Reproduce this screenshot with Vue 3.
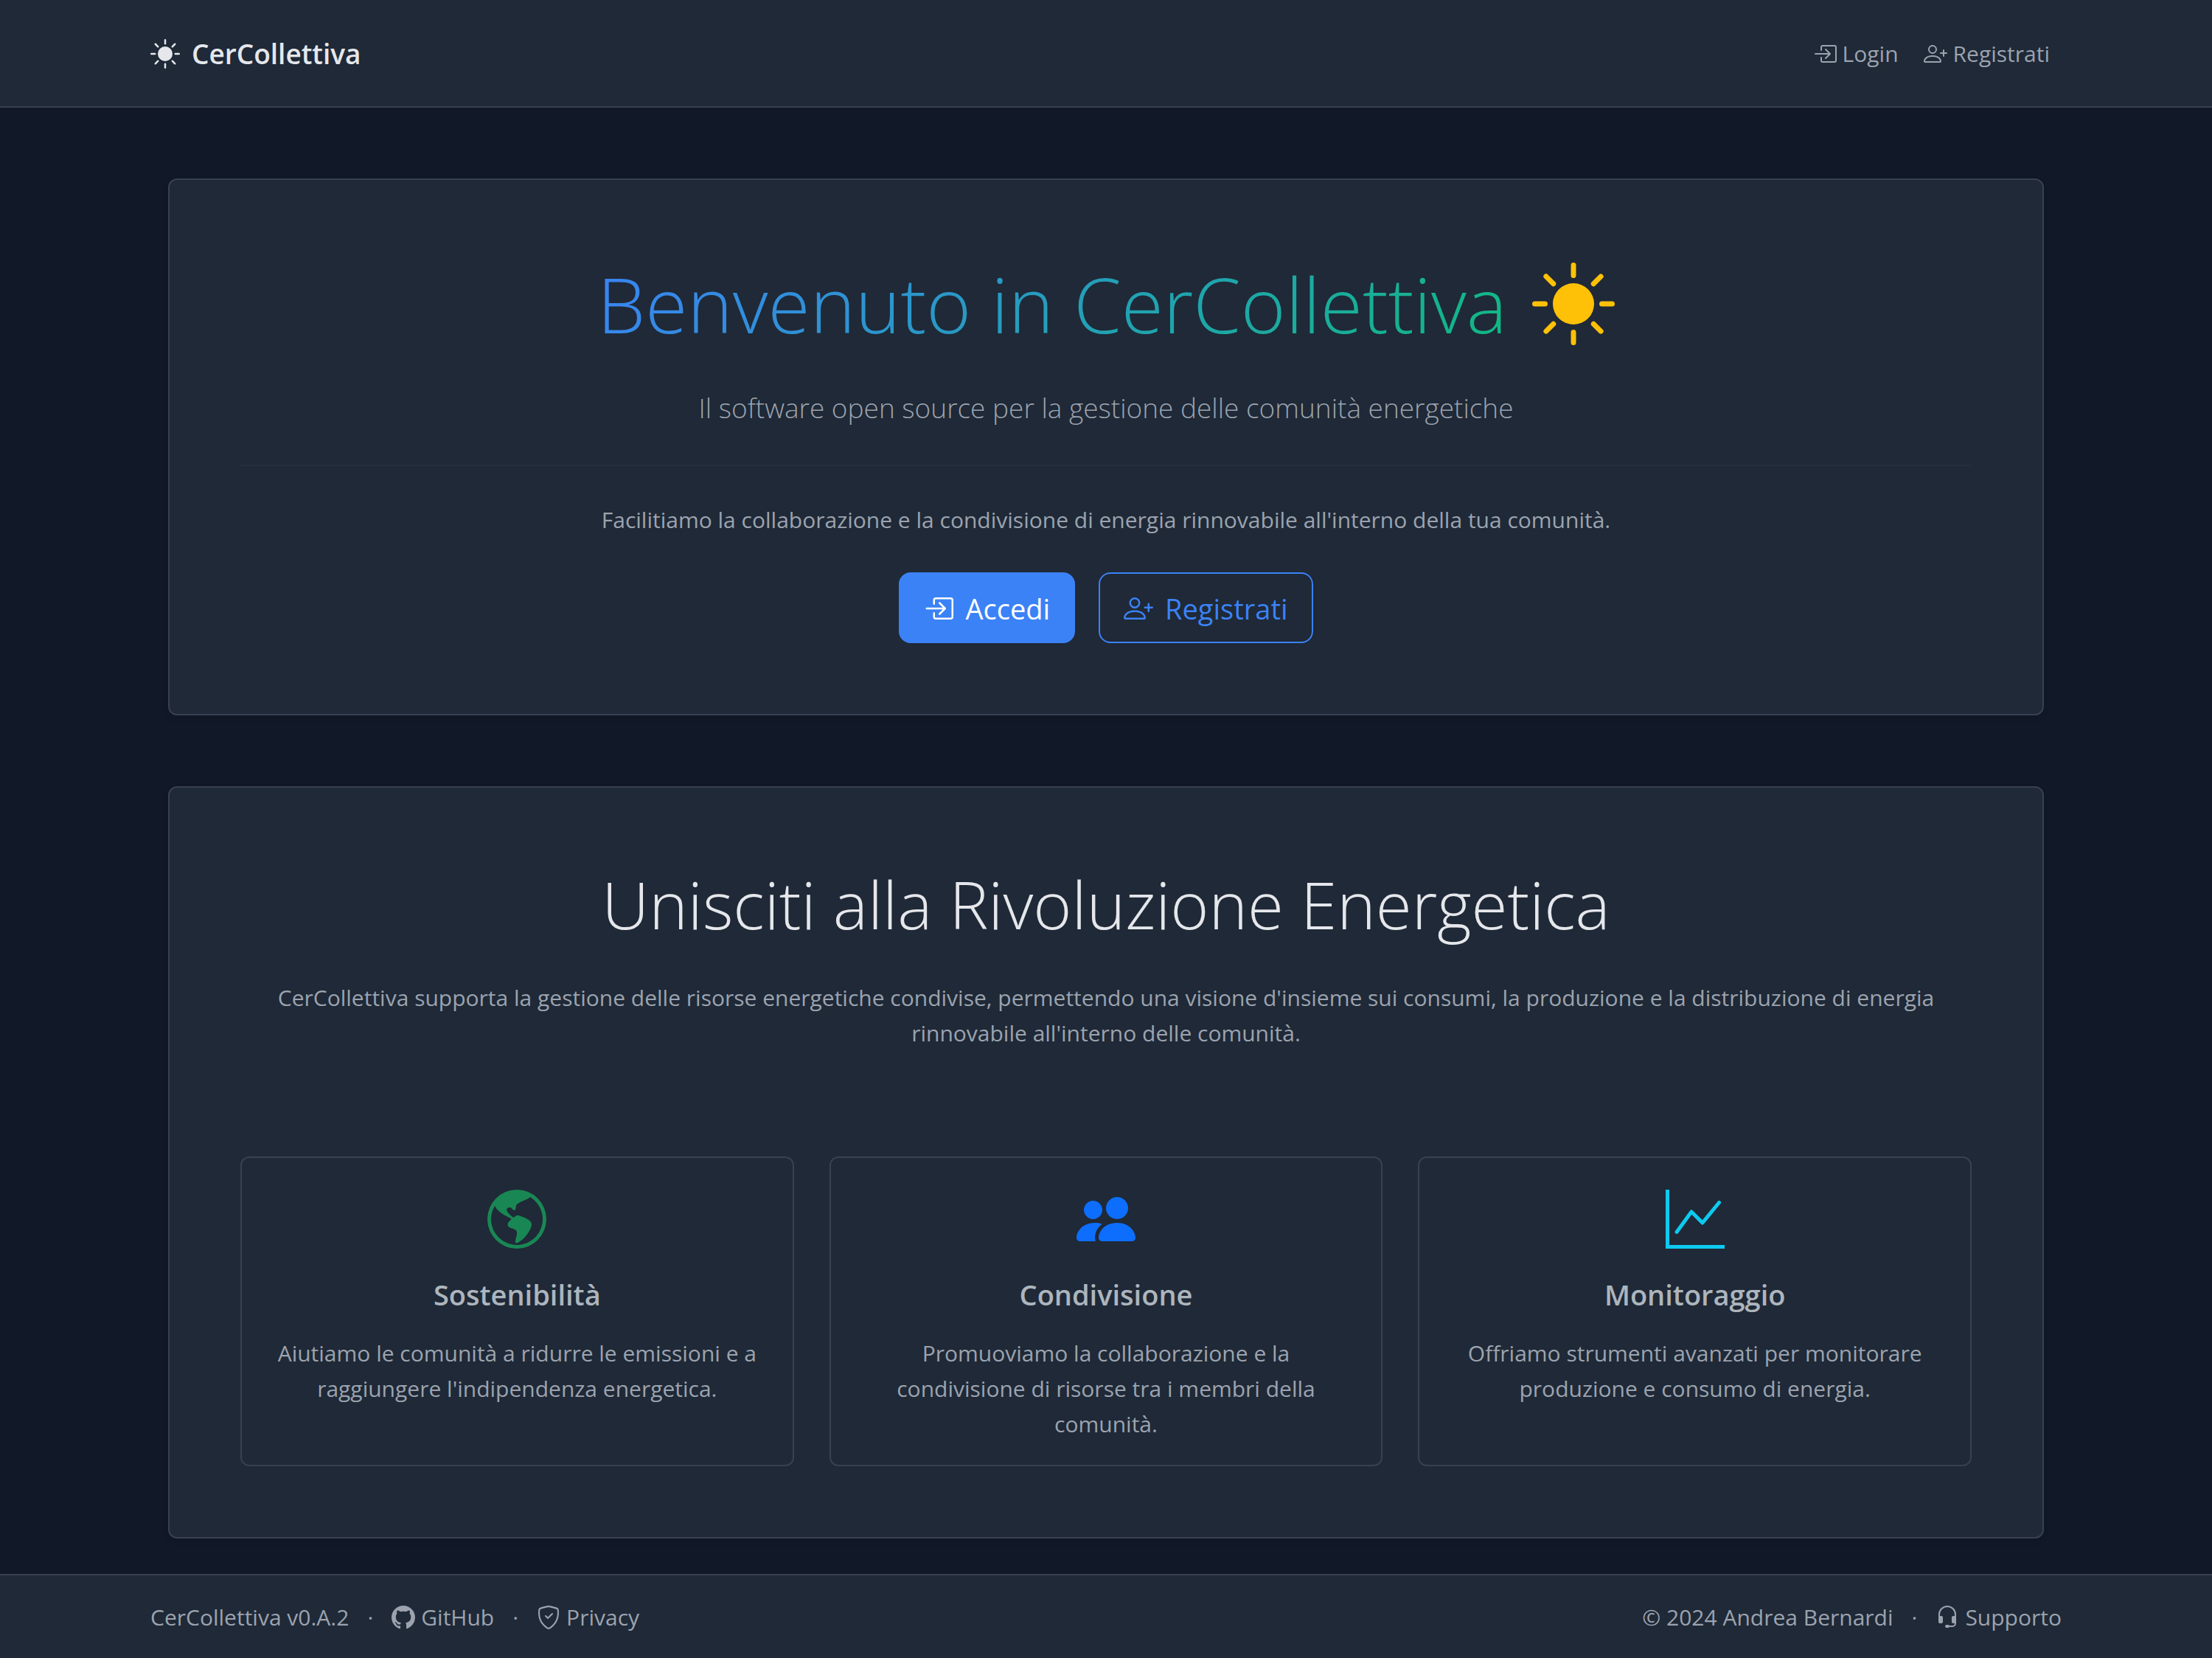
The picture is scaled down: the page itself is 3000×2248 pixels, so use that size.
<script setup>
import { h } from 'vue'

const paths = {
  sun: ['M8 12a4 4 0 1 0 0-8 4 4 0 0 0 0 8M8 0a.5.5 0 0 1 .5.5v2a.5.5 0 0 1-1 0v-2A.5.5 0 0 1 8 0m0 13a.5.5 0 0 1 .5.5v2a.5.5 0 0 1-1 0v-2A.5.5 0 0 1 8 13m8-5a.5.5 0 0 1-.5.5h-2a.5.5 0 0 1 0-1h2a.5.5 0 0 1 .5.5M3 8a.5.5 0 0 1-.5.5h-2a.5.5 0 0 1 0-1h2A.5.5 0 0 1 3 8m10.657-5.657a.5.5 0 0 1 0 .707l-1.414 1.415a.5.5 0 1 1-.707-.708l1.414-1.414a.5.5 0 0 1 .707 0m-9.193 9.193a.5.5 0 0 1 0 .707L3.05 13.657a.5.5 0 0 1-.707-.707l1.414-1.414a.5.5 0 0 1 .707 0m9.193 2.121a.5.5 0 0 1-.707 0l-1.414-1.414a.5.5 0 0 1 .707-.707l1.414 1.414a.5.5 0 0 1 0 .707M4.464 4.465a.5.5 0 0 1-.707 0L2.343 3.05a.5.5 0 1 1 .707-.707l1.414 1.414a.5.5 0 0 1 0 .708'],
  login: [
    'M6 3.5a.5.5 0 0 1 .5-.5h8a.5.5 0 0 1 .5.5v9a.5.5 0 0 1-.5.5h-8a.5.5 0 0 1-.5-.5v-2a.5.5 0 0 0-1 0v2A1.5 1.5 0 0 0 6.5 14h8a1.5 1.5 0 0 0 1.5-1.5v-9A1.5 1.5 0 0 0 14.5 2h-8A1.5 1.5 0 0 0 5 3.5v2a.5.5 0 0 0 1 0z',
    'M11.854 8.354a.5.5 0 0 0 0-.708l-3-3a.5.5 0 1 0-.708.708L10.293 7.5H1.5a.5.5 0 0 0 0 1h8.793l-2.147 2.146a.5.5 0 0 0 .708.708z'
  ],
  userPlus: [
    'M6 8a3 3 0 1 0 0-6 3 3 0 0 0 0 6m2-3a2 2 0 1 1-4 0 2 2 0 0 1 4 0m4 8c0 1-1 1-1 1H1s-1 0-1-1 1-4 6-4 6 3 6 4m-1-.004c-.001-.246-.154-.986-.832-1.664C9.516 10.68 8.289 10 6 10s-3.516.68-4.168 1.332c-.678.678-.83 1.418-.832 1.664z',
    'M13.5 5a.5.5 0 0 1 .5.5V7h1.5a.5.5 0 0 1 0 1H14v1.5a.5.5 0 0 1-1 0V8h-1.5a.5.5 0 0 1 0-1H13V5.5a.5.5 0 0 1 .5-.5'
  ],
  globe: ['M8 0a8 8 0 1 0 0 16A8 8 0 0 0 8 0M2.04 4.326c.325 1.329 2.532 2.54 3.717 3.19.48.263.793.434.743.484q-.121.12-.242.234c-.416.396-.787.749-.758 1.266.035.634.618.824 1.214 1.017.577.188 1.168.38 1.286.983.082.417-.075.988-.22 1.52-.215.782-.406 1.48.22 1.48 1.5-.5 3.798-3.186 4-5 .138-1.243-2-2-3.5-2.5-.478-.16-.755.081-.99.284-.172.15-.322.279-.51.216-.445-.148-2.5-2-1.5-2.5.78-.39.952-.171 1.227.182.078.099.163.208.273.318.609.304.662-.132.723-.633.039-.322.081-.671.277-.867.434-.434 1.265-.791 2.028-1.12.712-.306 1.365-.587 1.579-.88A7 7 0 1 1 2.04 4.327Z'],
  people: ['M7 14s-1 0-1-1 1-4 5-4 5 3 5 4-1 1-1 1zm4-6a3 3 0 1 0 0-6 3 3 0 0 0 0 6m-5.784 6A2.24 2.24 0 0 1 5 13c0-1.355.68-2.75 1.936-3.72A6.3 6.3 0 0 0 5 9c-4 0-5 3-5 4s1 1 1 1zM4.5 8a2.5 2.5 0 1 0 0-5 2.5 2.5 0 0 0 0 5'],
  graph: ['M0 0h1v15h15v1H0zm14.817 3.113a.5.5 0 0 1 .07.704l-4.5 5.5a.5.5 0 0 1-.74.037L7.06 6.767l-3.656 5.027a.5.5 0 0 1-.808-.588l4-5.5a.5.5 0 0 1 .758-.06l2.609 2.61 4.15-5.073a.5.5 0 0 1 .704-.07'],
  github: ['M8 0C3.58 0 0 3.58 0 8c0 3.54 2.29 6.53 5.47 7.59.4.07.55-.17.55-.38 0-.19-.01-.82-.01-1.49-2.01.37-2.53-.49-2.69-.94-.09-.23-.48-.94-.82-1.13-.28-.15-.68-.52-.01-.53.63-.01 1.08.58 1.23.82.72 1.21 1.87.87 2.33.66.07-.52.28-.87.51-1.07-1.78-.2-3.64-.89-3.64-3.95 0-.87.31-1.59.82-2.15-.08-.2-.36-1.02.08-2.12 0 0 .67-.21 2.2.82.64-.18 1.32-.27 2-.27s1.36.09 2 .27c1.53-1.04 2.2-.82 2.2-.82.44 1.1.16 1.92.08 2.12.51.56.82 1.27.82 2.15 0 3.07-1.87 3.75-3.65 3.95.29.25.54.73.54 1.48 0 1.07-.01 1.93-.01 2.2 0 .21.15.46.55.38A8.01 8.01 0 0 0 16 8c0-4.42-3.58-8-8-8'],
  shield: [
    'M5.338 1.59a61 61 0 0 0-2.837.856.48.48 0 0 0-.328.39c-.554 4.157.726 7.19 2.253 9.188a10.7 10.7 0 0 0 2.287 2.233c.346.244.652.42.893.533q.18.085.293.118a1 1 0 0 0 .101.025 1 1 0 0 0 .1-.025q.114-.034.294-.118c.24-.113.547-.29.893-.533a10.7 10.7 0 0 0 2.287-2.233c1.527-1.997 2.807-5.031 2.253-9.188a.48.48 0 0 0-.328-.39c-.651-.213-1.75-.56-2.837-.855C9.552 1.29 8.531 1.067 8 1.067c-.53 0-1.552.223-2.662.524zM5.072.56C6.157.265 7.31 0 8 0s1.843.265 2.928.56c1.11.3 2.229.655 2.887.87a1.54 1.54 0 0 1 1.044 1.262c.596 4.477-.787 7.795-2.465 9.99a11.8 11.8 0 0 1-2.517 2.453 7 7 0 0 1-1.048.625c-.28.132-.581.24-.829.24s-.548-.108-.829-.24a7 7 0 0 1-1.048-.625 11.8 11.8 0 0 1-2.517-2.453C1.928 10.487.545 7.169 1.141 2.692A1.54 1.54 0 0 1 2.185 1.43 63 63 0 0 1 5.072.56',
    'M10.854 5.146a.5.5 0 0 1 0 .708l-3 3a.5.5 0 0 1-.708 0l-1.5-1.5a.5.5 0 1 1 .708-.708L7.5 7.793l2.646-2.647a.5.5 0 0 1 .708 0'
  ],
  headset: ['M8 1a5 5 0 0 0-5 5v1h1a1 1 0 0 1 1 1v3a1 1 0 0 1-1 1H3a1 1 0 0 1-1-1V6a6 6 0 1 1 12 0v6a2.5 2.5 0 0 1-2.5 2.5H9.366a1 1 0 0 1-.866.5h-1a1 1 0 1 1 0-2h1a1 1 0 0 1 .866.5H11.5A1.5 1.5 0 0 0 13 12h-1a1 1 0 0 1-1-1V8a1 1 0 0 1 1-1h1V6a5 5 0 0 0-5-5']
}

// Inline icon sized by the font-size of its context
const Icon = ({ name }) =>
  h(
    'svg',
    { class: 'icon', viewBox: '0 0 16 16', width: '1em', height: '1em', fill: 'currentColor', 'aria-hidden': 'true' },
    paths[name].map((d) => h('path', { d, 'fill-rule': name === 'graph' ? 'evenodd' : 'nonzero' }))
  )
Icon.props = ['name']

const features = [
  { icon: 'globe', tone: 'success', title: 'Sostenibilità', text: "Aiutiamo le comunità a ridurre le emissioni e a raggiungere l'indipendenza energetica." },
  { icon: 'people', tone: 'primary', title: 'Condivisione', text: 'Promuoviamo la collaborazione e la condivisione di risorse tra i membri della comunità.' },
  { icon: 'graph', tone: 'info', title: 'Monitoraggio', text: 'Offriamo strumenti avanzati per monitorare produzione e consumo di energia.' }
]
</script>

<template>
  <div class="page">
    <header class="navbar">
      <div class="container bar">
        <a class="brand" href="#"><span class="glyph glyph-lg"><Icon name="sun" /></span>CerCollettiva</a>
        <nav class="nav">
          <a class="link" href="#"><span class="glyph"><Icon name="login" /></span>Login</a>
          <a class="link" href="#"><span class="glyph"><Icon name="userPlus" /></span>Registrati</a>
        </nav>
      </div>
    </header>

    <main class="container main">
      <section class="panel hero">
        <h1 class="hero-title">
          <span class="gradient">Benvenuto in CerCollettiva</span>
          <span class="glyph glyph-hero"><Icon name="sun" /></span>
        </h1>
        <p class="lead">Il software open source per la gestione delle comunità energetiche</p>
        <hr class="rule" />
        <p class="intro">Facilitiamo la collaborazione e la condivisione di energia rinnovabile all'interno della tua comunità.</p>
        <div class="actions">
          <button class="btn btn-solid" type="button"><span class="glyph glyph-lg"><Icon name="login" /></span>Accedi</button>
          <button class="btn btn-outline" type="button"><span class="glyph glyph-lg"><Icon name="userPlus" /></span>Registrati</button>
        </div>
      </section>

      <section class="panel">
        <h2 class="section-title">Unisciti alla Rivoluzione Energetica</h2>
        <p class="section-text">CerCollettiva supporta la gestione delle risorse energetiche condivise, permettendo una visione d'insieme sui consumi, la produzione e la distribuzione di energia rinnovabile all'interno delle comunità.</p>
        <div class="features">
          <article v-for="f in features" :key="f.title" class="feature">
            <span class="glyph glyph-xl" :class="f.tone"><Icon :name="f.icon" /></span>
            <h3 class="feature-title">{{ f.title }}</h3>
            <p class="feature-text">{{ f.text }}</p>
          </article>
        </div>
      </section>
    </main>

    <footer class="footer">
      <div class="container bar">
        <div class="foot-group">
          <span>CerCollettiva v0.A.2</span>
          <span>·</span>
          <a class="link" href="#"><span class="glyph"><Icon name="github" /></span>GitHub</a>
          <span>·</span>
          <a class="link" href="#"><span class="glyph"><Icon name="shield" /></span>Privacy</a>
        </div>
        <div class="foot-group">
          <span>© 2024 Andrea Bernardi</span>
          <span>·</span>
          <a class="link" href="#"><span class="glyph"><Icon name="headset" /></span>Supporto</a>
        </div>
      </div>
    </footer>
  </div>
</template>

<style>
body {
  margin: 0;
  background: #111827;
}
</style>

<style scoped>
.page {
  display: flex;
  flex-direction: column;
  min-height: 100vh;
  background: #111827;
  color: #9ca3af;
  font-family: "Open Sans", "Noto Sans", sans-serif;
  font-size: 30px;
  line-height: 48px;
}
h1, h2, h3, p {
  margin: 0;
}
.container {
  box-sizing: border-box;
  width: 100%;
  max-width: 2640px;
  margin: 0 auto;
  padding: 0 24px;
}
.bar {
  display: flex;
  align-items: center;
  justify-content: space-between;
}
.glyph {
  display: inline-flex;
  flex: none;
  font-size: 32px;
  line-height: 1;
}
.glyph-lg {
  font-size: 40px;
}
.glyph-xl {
  font-size: 80px;
}
.glyph-hero {
  font-size: 112px;
  color: #ffc107;
}
.link {
  display: inline-flex;
  align-items: center;
  gap: 8px;
  color: #9ca3af;
  text-decoration: none;
}

.navbar {
  padding: 43px 0 41px;
  background: #1f2937;
  border-bottom: 2px solid #374151;
}
.brand {
  display: inline-flex;
  align-items: center;
  gap: 16px;
  color: #e5e7eb;
  font-size: 37px;
  font-weight: 600;
  line-height: 60px;
  text-decoration: none;
}
.nav {
  display: flex;
  gap: 34px;
  padding-right: 16px;
}

.main {
  display: flex;
  flex: 1;
  flex-direction: column;
  gap: 96px;
  padding: 96px 48px 48px;
}
.panel {
  padding: 96px;
  background: #1f2937;
  border: 2px solid #374151;
  border-radius: 12px;
  box-shadow: 0 4px 8px rgba(0, 0, 0, 0.08);
  text-align: center;
}
.hero-title {
  display: flex;
  align-items: center;
  justify-content: center;
  gap: 34px;
  font-size: 104px;
  font-weight: 300;
  line-height: 144px;
}
.gradient {
  background: linear-gradient(135deg, #3b82f6, #10b981);
  background-clip: text;
  -webkit-background-clip: text;
  color: transparent;
}
.lead {
  margin-top: 38px;
  font-size: 37px;
  font-weight: 300;
  line-height: 62px;
}
.rule {
  height: 2px;
  margin: 46px 0 49px;
  border: 0;
  background: #252f3d;
}
.actions {
  display: flex;
  justify-content: center;
  gap: 32px;
  margin-top: 47px;
}
.btn {
  display: inline-flex;
  align-items: center;
  gap: 16px;
  padding: 17px 32px 15px;
  border: 2px solid #3b82f6;
  border-radius: 16px;
  font-family: inherit;
  font-size: 38px;
  line-height: 60px;
}
.btn-solid {
  background: #3b82f6;
  color: #fff;
}
.btn-outline {
  background: transparent;
  color: #3b82f6;
}

.section-title {
  color: #e5e7eb;
  font-size: 89px;
  font-weight: 300;
  line-height: 124px;
}
.section-text {
  margin-top: 41px;
}
.features {
  display: grid;
  grid-template-columns: repeat(3, 1fr);
  gap: 48px;
  margin-top: 143px;
}
.feature {
  padding: 43px 40px 31px;
  border: 2px solid #374151;
  border-radius: 12px;
}
.feature .glyph {
  display: flex;
  justify-content: center;
}
.feature-title {
  margin: 38px 0 32px;
  color: #adb5bd;
  font-size: 38px;
  font-weight: 600;
  line-height: 48px;
}
.success {
  color: #198754;
}
.primary {
  color: #0d6efd;
}
.info {
  color: #0dcaf0;
}

.footer {
  padding: 33px 0 31px;
  background: #1f2937;
  border-top: 2px solid #374151;
}
.foot-group {
  display: flex;
  align-items: center;
  gap: 25px;
}
</style>
